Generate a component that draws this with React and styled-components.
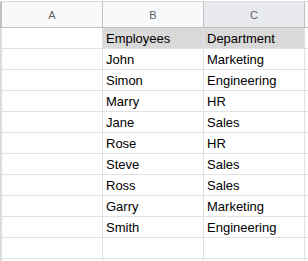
import styled, { createGlobalStyle } from "styled-components";

const GlobalStyle = createGlobalStyle`
  html, body {
    margin: 0;
    padding: 0;
    background: #ffffff;
    overflow: hidden;
  }
  body {
    font-family: "Liberation Sans", Arial, sans-serif;
  }
`;

const Viewport = styled.div`
  width: 100vw;
  height: 100vh;
  overflow: hidden;
`;

const Sheet = styled.div`
  display: grid;
  grid-template-columns: 2px 101px 101px 101px 1fr;
  grid-template-rows: 27px;
  grid-auto-rows: 21px;
  margin-top: 1px;
`;

const Row = styled.div`
  display: contents;
`;

const Corner = styled.div`
  background: #c0c0c0;
  border-top: 1px solid #dadce0;
  box-sizing: border-box;
`;

const ColHead = styled.div`
  box-sizing: border-box;
  border-top: 1px solid #dadce0;
  border-bottom: 1px solid #c0c0c0;
  border-right: 1px solid #c0c0c0;
  background: ${({ $active }) => ($active ? "#e8eaed" : "#f8f9fa")};
  color: #5f6368;
  font-size: 11px;
  display: flex;
  align-items: center;
  justify-content: center;
`;

const RowHead = styled.div`
  background: #dadce0;
`;

const Cell = styled.div`
  box-sizing: border-box;
  border-right: 1px solid #e2e2e2;
  border-bottom: 1px solid #e2e2e2;
  background: ${({ $fill }) => $fill || "#ffffff"};
  color: #000000;
  font-size: 13px;
  padding: 0 3px;
  display: flex;
  align-items: center;
  white-space: nowrap;
  overflow: hidden;
`;

const rows = [
  ["Employees", "Department"],
  ["John", "Marketing"],
  ["Simon", "Engineering"],
  ["Marry", "HR"],
  ["Jane", "Sales"],
  ["Rose", "HR"],
  ["Steve", "Sales"],
  ["Ross", "Sales"],
  ["Garry", "Marketing"],
  ["Smith", "Engineering"],
  ["", ""],
  ["", ""],
];

const App = () => {
  return (
    <Viewport>
      <GlobalStyle />
      <Sheet>
        <Row>
          <Corner />
          <ColHead>A</ColHead>
          <ColHead>B</ColHead>
          <ColHead $active>C</ColHead>
          <ColHead />
        </Row>
        {rows.map(([emp, dept], i) => (
          <Row key={i}>
            <RowHead />
            <Cell />
            <Cell $fill={i === 0 ? "#d9d9d9" : undefined}>{emp}</Cell>
            <Cell $fill={i === 0 ? "#d9d9d9" : undefined}>{dept}</Cell>
            <Cell />
          </Row>
        ))}
      </Sheet>
    </Viewport>
  );
};

export default App;
